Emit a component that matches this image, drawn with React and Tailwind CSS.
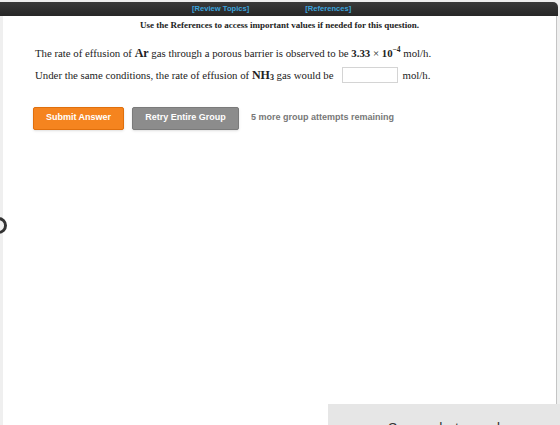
import React from 'react';

const serif = { fontFamily: '"Liberation Serif", "Times New Roman", serif' };
const sans = { fontFamily: '"Liberation Sans", Arial, sans-serif' };

const QuestionHeader = () => (
    <div className="h-[14px] bg-gradient-to-b from-[#3a3a3a] to-[#262626] rounded-tr-[5px] flex items-center text-[7.6px] font-bold text-[#3aa3dc]" style={sans}>
        <span className="ml-[192px]">[Review Topics]</span>
        <span className="ml-[56px]">[References]</span>
    </div>
);

const App = () => {
    return (
        <div className="relative w-[560px] h-[425px] overflow-hidden bg-[#efefef]">
            <div className="pt-[2px] pr-[2px]">
                <QuestionHeader/>
                <div className="ml-[3px] mr-[1px] bg-white h-[420px] border-r border-[#c4c4c4]">
                    <p className="text-center text-[9px] font-bold text-[#222] pt-[3px]" style={serif}>
                        Use the References to access important values if needed for this question.
                    </p>

                    <div className="pl-[32px] pt-[12px] text-[10.8px] leading-[16px] text-[#222]" style={serif}>
                        <p>
                            The rate of effusion of <b className="text-[12px]">Ar</b> gas through a porous barrier is observed to be{' '}
                            <b>3.33</b> × <b>10<sup className="text-[7.5px] -top-[5px]">−4</sup></b> mol/h.
                        </p>
                        <p className="mt-[6px] flex items-center">
                            <span>
                                Under the same conditions, the rate of effusion of{' '}
                                <b className="text-[12px]">NH<sub className="text-[8px] -bottom-[1px]">3</sub></b> gas would be
                            </span>
                            <input type="text" className="ml-[8px] w-[56px] h-[16px] border border-[#d4d4d4] bg-white"/>
                            <span className="ml-[5px]">mol/h.</span>
                        </p>
                    </div>

                    <div className="flex items-center pl-[30px] pt-[24px] text-[9px] font-bold" style={sans}>
                        <button className="w-[91px] h-[23px] rounded-[2px] bg-[#f5841f] border border-[#e06f0c] text-white shadow-sm">
                            Submit Answer
                        </button>
                        <button className="ml-[8px] w-[107px] h-[23px] rounded-[2px] bg-[#8c8c8c] border border-[#7a7a7a] text-white shadow-sm">
                            Retry Entire Group
                        </button>
                        <span className="ml-[12px] text-[#777]">5 more group attempts remaining</span>
                    </div>
                </div>
            </div>

            {/* edge of the page-turn control */}
            <div className="absolute left-[-10px] top-[217px] w-[17px] h-[17px] rounded-full border-[3px] border-[#333] blur-[0.6px]"/>

            {/* toast */}
            <div className="absolute left-[328px] top-[404px] w-[232px] h-[40px] bg-[#e6e6e6] text-[14px] text-[#333] pl-[60px] pt-[14px]" style={sans}>
                Screenshot saved
            </div>
        </div>
    );
};

export default App;
